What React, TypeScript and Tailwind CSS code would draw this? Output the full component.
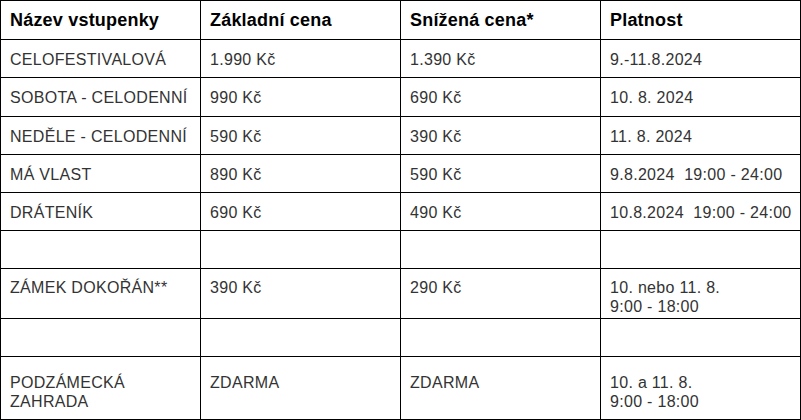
const rows: { cells: string[][]; h: string; pt: string }[] = [
  { cells: [["CELOFESTIVALOVÁ"], ["1.990 Kč"], ["1.390 Kč"], ["9.-11.8.2024"]], h: "h-[38px]", pt: "pt-[10px]" },
  { cells: [["SOBOTA - CELODENNÍ"], ["990 Kč"], ["690 Kč"], ["10. 8. 2024"]], h: "h-[39px]", pt: "pt-[10px]" },
  { cells: [["NEDĚLE - CELODENNÍ"], ["590 Kč"], ["390 Kč"], ["11. 8. 2024"]], h: "h-[38px]", pt: "pt-[10px]" },
  { cells: [["MÁ VLAST"], ["890 Kč"], ["590 Kč"], ["9.8.2024\u00a0\u00a019:00 - 24:00"]], h: "h-[38px]", pt: "pt-[10px]" },
  { cells: [["DRÁTENÍK"], ["690 Kč"], ["490 Kč"], ["10.8.2024\u00a0\u00a019:00 - 24:00"]], h: "h-[38px]", pt: "pt-[10px]" },
  { cells: [[""], [""], [""], [""]], h: "h-[38px]", pt: "pt-[10px]" },
  { cells: [["ZÁMEK DOKOŘÁN**"], ["390 Kč"], ["290 Kč"], ["10. nebo 11. 8.", "9:00 - 18:00"]], h: "h-[50px]", pt: "pt-[9px]" },
  { cells: [[""], [""], [""], [""]], h: "h-[38px]", pt: "pt-[10px]" },
  { cells: [["PODZÁMECKÁ", "ZAHRADA"], ["ZDARMA"], ["ZDARMA"], ["10. a 11. 8.", "9:00 - 18:00"]], h: "h-[63px]", pt: "pt-[16px]" },
];

const headers = ["Název vstupenky", "Základní cena", "Snížená cena*", "Platnost"];

export default function App() {
  return (
    <div className="h-[420px] w-[801px] overflow-hidden bg-white" style={{ fontFamily: '"Liberation Sans", Arial, sans-serif' }}>
      <table className="w-[800px] table-fixed border-collapse">
        <colgroup>
          <col className="w-[200px]" />
          <col className="w-[200px]" />
          <col className="w-[200px]" />
          <col className="w-[200px]" />
        </colgroup>
        <thead>
          <tr className="h-[39px]">
            {headers.map((t) => (
              <th key={t} className="border border-black px-[9px] pt-[9px] text-left align-top text-[18px] leading-[20px] tracking-[0.2px] font-bold text-black">
                {t}
              </th>
            ))}
          </tr>
        </thead>
        <tbody>
          {rows.map((r, i) => (
            <tr key={i} className={r.h}>
              {r.cells.map((lines, j) => (
                <td key={j} className={`border border-black px-[9px] ${r.pt} align-top text-[16px] leading-[19px] tracking-[0.3px] text-[#333] whitespace-nowrap`}>
                  {lines.map((l, k) => (
                    <div key={k}>{l}</div>
                  ))}
                </td>
              ))}
            </tr>
          ))}
        </tbody>
      </table>
    </div>
  );
}
